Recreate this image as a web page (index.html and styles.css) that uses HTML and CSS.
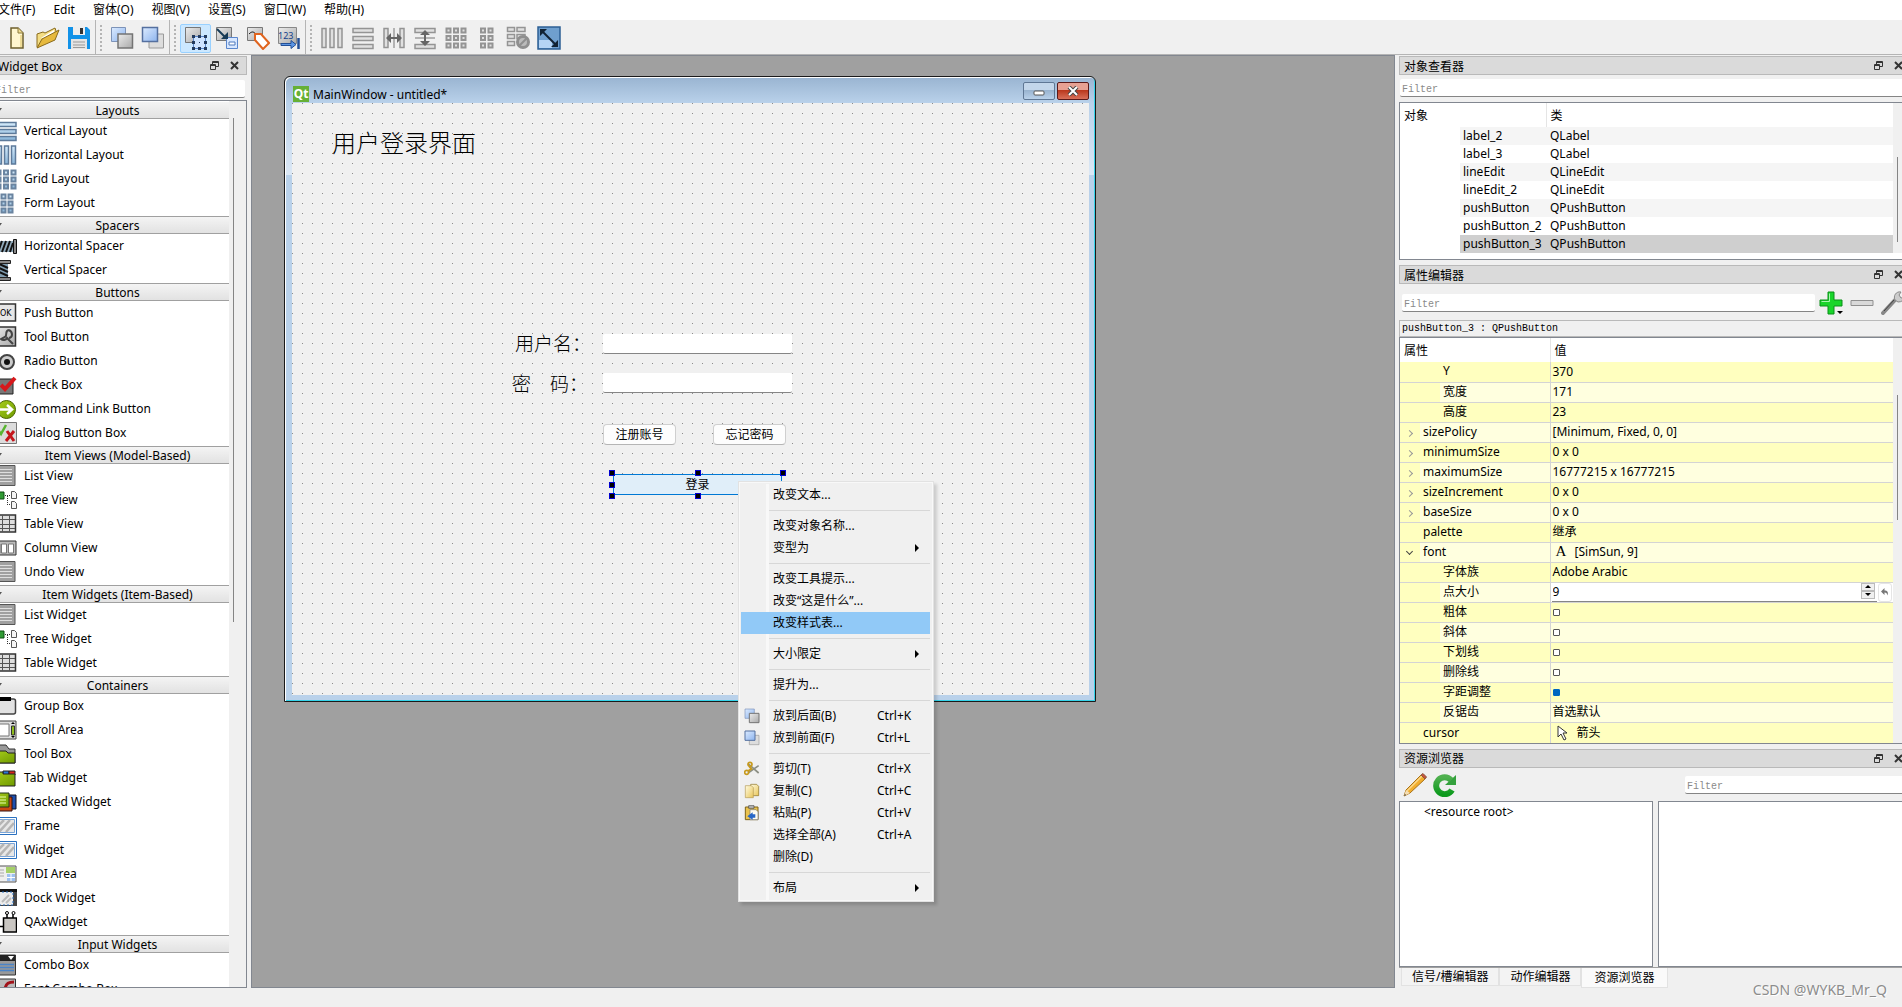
FILE: index.html
```html
<!DOCTYPE html>
<html lang="zh-CN">
<head>
<meta charset="utf-8">
<title>MainWindow - untitled*</title>
<link rel="stylesheet" href="styles.css">
</head>
<body>
<svg class="sprite" aria-hidden="true">
  <defs>
    <linearGradient id="blue" x1="0" y1="0" x2="1" y2="1"><stop offset="0" stop-color="#dcebff"/><stop offset="1" stop-color="#8db4ee"/></linearGradient>
    <linearGradient id="grey" x1="0" y1="0" x2="1" y2="1"><stop offset="0" stop-color="#ececec"/><stop offset="1" stop-color="#a9a9a9"/></linearGradient>
    <linearGradient id="cell" x1="0" y1="0" x2="0" y2="1"><stop offset="0" stop-color="#d5ebfb"/><stop offset="1" stop-color="#88b4d8"/></linearGradient>
    <linearGradient id="green" x1="0" y1="0" x2="0" y2="1"><stop offset="0" stop-color="#4fb04f"/><stop offset="1" stop-color="#0d9a1d"/></linearGradient>
    <linearGradient id="gold" x1="0" y1="0" x2="1" y2="1"><stop offset="0" stop-color="#fffbe0"/><stop offset="1" stop-color="#e8c55a"/></linearGradient>
    <linearGradient id="lime" x1="0" y1="0" x2="1" y2="1"><stop offset="0" stop-color="#a9cf1c"/><stop offset="1" stop-color="#6f9a00"/></linearGradient>
  </defs>
  <symbol id="new" viewBox="0 0 24 24"><path d="M6 2h7l5 5v15H6z" fill="#fff6cf" stroke="#6e5f2c" stroke-width="1.500"/><path d="M13 2v5h5" fill="#f1dd93" stroke="#8c7a3c"/><path d="M16 9v12" stroke="#efdc96" stroke-width="2"/></symbol>
  <symbol id="open" viewBox="0 0 24 24"><path d="M1 21V8l6-2 2 1 10-5 1 3 1 3" fill="#f3dd84" stroke="#8a6b1c"/><path d="M5 12 18 4l1 7" fill="#fff"/><path d="M1 22 6 13 23 4l-4 10z" fill="#e6b93d" stroke="#8a6b1c"/></symbol>
  <symbol id="save" viewBox="0 0 24 24"><path d="M1 1h19l3 3v19H1z" fill="#1292e8"/><path d="M6 1h12v8H6z" fill="#eee"/><path d="M13 2h3v6h-3z" fill="#333"/><path d="M4 13h16v10H4z" fill="#e4e4e4"/><path d="M6 16h12M6 19h12M6 21.500h12" stroke="#999"/></symbol>
  <symbol id="back" viewBox="0 0 24 24"><path d="M1.500 1.500h14v14h-14z" fill="url(#blue)" stroke="#7d93b8"/><path d="M8 8h14.500v14H8z" fill="url(#grey)" stroke="#747474" stroke-width="1.500"/></symbol>
  <symbol id="front" viewBox="0 0 24 24"><path d="M8 8h14.500v14H8z" fill="#ddd" stroke="#9a9a9a"/><path d="M1.500 1.500h15v14h-15z" fill="url(#blue)" stroke="#55709f" stroke-width="1.500"/></symbol>
  <symbol id="edit-widgets" viewBox="0 0 24 24"><path d="M1.500 1.500h15v15h-15z" fill="url(#grey)" stroke="#777"/><path d="M9.500 10.500h12v12h-12z" fill="#cfe4ff" stroke="#5a86cc"/><path d="M8 9h3v3H8zM14 9h3v3h-3zM20 9h3v3h-3zM8 15h3v3H8zM20 15h3v3h-3zM8 21h3v3H8zM14 21h3v3h-3zM20 21h3v3h-3zM15 16h1v1h-1z" fill="#233a5c"/></symbol>
  <symbol id="edit-signals" viewBox="0 0 24 24"><path d="M1.500 1.500h15v13h-15z" fill="url(#grey)" stroke="#777"/><path d="M11.500 11.500h11v11h-11z" fill="#d7e7ff" stroke="#5a86cc"/><path d="M14 16h6v3h-6z" fill="#fff" stroke="#4d79bd"/><path d="m2 3 9 9" stroke="#173b57" stroke-width="2"/><path d="M13 13V6L6 13z" fill="#173b57"/></symbol>
  <symbol id="edit-buddies" viewBox="0 0 24 24"><path d="M1.500 1.500h15v13h-15z" fill="url(#grey)" stroke="#777"/><path d="M3 8c3-3 5-3 8 2" fill="none" stroke="#222"/><path d="M9 8h6l8 9-6 6-8-9z" fill="#fff" stroke="#e0641e" stroke-width="2"/></symbol>
  <symbol id="g-cols" viewBox="0 0 24 24"><path d="M2 2.500h4v19H2zM10 2.500h4v19h-4zM18 2.500h4v19h-4z" fill="#e0e0e0" stroke="#949494" stroke-width="1.500"/></symbol>
  <symbol id="g-rows" viewBox="0 0 24 24"><path d="M2 2.500h20v4H2zM2 10.500h20v4H2zM2 18.500h20v4H2z" fill="#e0e0e0" stroke="#949494" stroke-width="1.500"/></symbol>
  <symbol id="g-hsplit" viewBox="0 0 24 24"><path d="M2 2.500h4v19H2zM18 2.500h4v19h-4z" fill="#e0e0e0" stroke="#949494" stroke-width="1.500"/><path d="M12 2v20" stroke="#777"/><path d="m4 12 5-5v4h6V7l5 5-5 5v-4H9v4z" fill="#666"/></symbol>
  <symbol id="g-vsplit" viewBox="0 0 24 24"><path d="M2 2.500h20v4H2zM2 18.500h20v4H2z" fill="#e0e0e0" stroke="#949494" stroke-width="1.500"/><path d="M2 12h20" stroke="#777"/><path d="m12 4 5 5h-4v6h4l-5 5-5-5h4V9H7z" fill="#666"/></symbol>
  <symbol id="g-grid" viewBox="0 0 24 24"><path d="M2.500 2.500h4v4h-4zM10 2.500h4v4h-4zM17.500 2.500h4v4h-4zM2.500 10h4v4h-4zM10 10h4v4h-4zM17.500 10h4v4h-4zM2.500 17.500h4v4h-4zM10 17.500h4v4h-4zM17.500 17.500h4v4h-4z" fill="#e0e0e0" stroke="#949494" stroke-width="2"/></symbol>
  <symbol id="g-form" viewBox="0 0 24 24"><path d="M6 2.500h4v4H6zM13.500 2.500h4v4h-4zM6 10h4v4H6zM13.500 10h4v4h-4zM6 17.500h4v4H6zM13.500 17.500h4v4h-4z" fill="#e0e0e0" stroke="#949494" stroke-width="2"/></symbol>
  <symbol id="g-break" viewBox="0 0 24 24"><path d="M1.500 1.500h7v4h-7zM11 1.500h8v4h-8zM1.500 8.500h7v4h-7zM11 8.500h8v4h-8zM1.500 15.500h7v4h-7z" fill="#e0e0e0" stroke="#949494" stroke-width="1.500"/><circle cx="17" cy="16" r="5.500" fill="#bbb" stroke="#8f8f8f" stroke-width="3"/><path d="m13 20 8-8" stroke="#8f8f8f" stroke-width="2"/></symbol>
  <symbol id="adjust" viewBox="0 0 24 24"><path d="M1 1h22v22H1z" fill="#6f9fce" stroke="#2c5f94" stroke-width="1.500"/><path d="M2 14h13v8H2z" fill="#b5d4f4"/><path d="m6 6 12 12" stroke="#123" stroke-width="2"/><path d="M3 3h7l-7 7zM21 21h-7l7-7z" fill="#123"/></symbol>

  <symbol id="float" viewBox="0 0 9 9"><path d="M2.500 3V.5h6v5H6M.5 3.500h5v5h-5zM.5 4.500h5M2.500 1.500h6" fill="none" stroke="#333"/></symbol>
  <symbol id="cross" viewBox="0 0 9 9"><path d="m1 1 7 7M8 1 1 8" stroke="#333" stroke-width="2"/></symbol>

  <symbol id="rows" viewBox="0 0 24 24"><path d="M1 3.500h22v4H1zM1 10.500h22v4H1zM1 17.500h22v4H1z" fill="url(#cell)" stroke="#5d7a9a" stroke-width="1.500"/></symbol>
  <symbol id="cols" viewBox="0 0 24 24"><path d="M4.500 3h4v18h-4zM11.500 3h4v18h-4zM18.500 3h4v18h-4z" fill="url(#cell)" stroke="#5d7a9a" stroke-width="1.500"/></symbol>
  <symbol id="grid" viewBox="0 0 24 24"><path d="M3.500 3.500h4v4h-4zM11 3.500h4v4h-4zM18.500 3.500h4v4h-4zM3.500 10.500h4v4h-4zM11 10.500h4v4h-4zM18.500 10.500h4v4h-4zM3.500 17.500h4v4h-4zM11 17.500h4v4h-4zM18.500 17.500h4v4h-4z" fill="url(#cell)" stroke="#6a84a0" stroke-width="2"/></symbol>
  <symbol id="form" viewBox="0 0 24 24"><path d="M8.500 3.500h4v4h-4zM15.500 3.500h4v4h-4zM8.500 10.500h4v4h-4zM15.500 10.500h4v4h-4zM8.500 17.500h4v4h-4zM15.500 17.500h4v4h-4z" fill="url(#cell)" stroke="#6a84a0" stroke-width="2"/></symbol>
  <symbol id="hspacer" viewBox="0 0 24 24"><path d="M4 7h16v11H4z" fill="#8fa9ba"/><path d="m5 18 4-11M9 18l4-11M13 18l4-11M17 18l3-9" stroke="#111" stroke-width="2"/><path d="M20.500 5.500h3v14h-3z" fill="#888" stroke="#111"/></symbol>
  <symbol id="vspacer" viewBox="0 0 24 24"><path d="M7 5h8v14H7z" fill="#7f9bae"/><path d="m6 6 9 4M6 10l9 4M6 14l9 4" stroke="#111" stroke-width="2"/><path d="M3.500 2.500h14v3h-14zM3.500 19.500h14v3h-14z" fill="#888" stroke="#222"/></symbol>
  <symbol id="tool" viewBox="0 0 24 24"><path d="M0 2h22.500v19H0z" fill="url(#grey)" stroke="#333" stroke-width="1.500"/><path d="M16 5c-5 1-1 5-4 7l-4 2c2 2 5 1 6-1l6 6M16 5c4 2 4 7 0 8" fill="none" stroke="#444" stroke-width="2"/></symbol>
  <symbol id="radio" viewBox="0 0 24 24"><circle cx="14" cy="13" r="7" fill="#ccc" stroke="#444" stroke-width="2"/><circle cx="14" cy="13" r="3" fill="#111"/></symbol>
  <symbol id="check" viewBox="0 0 24 24"><path d="M3 6h17v15H3z" fill="#777" stroke="#222"/><path d="m8 12 4 4L22 5" fill="none" stroke="#d7191c" stroke-width="4"/></symbol>
  <symbol id="cmdlink" viewBox="0 0 24 24"><circle cx="13.500" cy="12.500" r="9" fill="url(#lime)" stroke="#4a6600"/><path d="M7 12.500h10M14 8l5 4.500-5 4.500" fill="none" stroke="#fff" stroke-width="2.500"/></symbol>
  <symbol id="dialog" viewBox="0 0 24 24"><path d="M0 1.500h23.500v21H0z" fill="#dcdcdc" stroke="#777"/><path d="m5 9 3 4 5-9" fill="none" stroke="#58b531" stroke-width="2.500"/><path d="m14 10 7 10M21 10l-8 10" stroke="#c4161c" stroke-width="3"/></symbol>
  <symbol id="list" viewBox="0 0 24 24"><path d="M0 1.500h22v20H0z" fill="#a0a0a0" stroke="#555"/><path d="M7 5.500h12M7 8.500h12M7 11.500h12M7 14.500h12M7 17.500h12" stroke="#dedede"/></symbol>
  <symbol id="tree" viewBox="0 0 24 24"><path d="M3 4h8v7H3z" fill="#2f9a33" stroke="#0a4a10"/><path d="M12 7.500h6M14.500 8v9M14 16.500h4" stroke="#333" stroke-dasharray="1 1"/><path d="M18.500 3.500h3l2 2v5h-5zM18.500 13.500h3l2 2v5h-5z" fill="#f4f4f4" stroke="#555"/></symbol>
  <symbol id="table" viewBox="0 0 24 24"><path d="M0 3h22.500v17H0z" fill="#dedede" stroke="#333" stroke-width="1.500"/><path d="M0 7.500h22M0 12.500h22M0 16.500h22M9.500 3v17M16.500 3v17" stroke="#555"/></symbol>
  <symbol id="column" viewBox="0 0 24 24"><path d="M0 5h23v14H0z" fill="#bbb" stroke="#333"/><path d="M2 8h5v9H2zM8.500 8h5v9h-5zM15.500 8h5v9h-5z" fill="#fff" stroke="#777"/></symbol>
  <symbol id="group" viewBox="0 0 24 24"><rect x="0" y="5" width="22.500" height="15" rx="2" fill="#e2e2e2" stroke="#444" stroke-width="1.500"/><path d="M7 3h11v4H7z" fill="#000"/></symbol>
  <symbol id="scroll" viewBox="0 0 24 24"><path d="M0 3h23v18H0z" fill="#ddd" stroke="#444"/><path d="M5 6h11v12H5z" fill="#fff" stroke="#777"/><path d="M18.500 8h3v9h-3z" fill="#8fbd1c" stroke="#333"/><path d="m18 6 2-2 2 2zM18 18l2 2 2-2z" fill="#000"/></symbol>
  <symbol id="toolbox" viewBox="0 0 24 24"><path d="M0 3h13l3 4h6v14H0z" fill="#999" stroke="#333"/><path d="M0 9h13l2 2h7v10H0z" fill="url(#lime)" stroke="#222"/></symbol>
  <symbol id="tab" viewBox="0 0 24 24"><path d="M10 5h6v4h-6z" fill="#2c79d8" stroke="#222"/><path d="M16 5h6v4h-6z" fill="#d8261c" stroke="#222"/><path d="M0 6h10v2h12v12H0z" fill="url(#lime)" stroke="#222"/></symbol>
  <symbol id="stack" viewBox="0 0 24 24"><path d="M10 5h13v14H10z" fill="#1d4fae" stroke="#112"/><path d="M6 7h13v14H6z" fill="#c94812" stroke="#311"/><path d="M0 3h16v14H0z" fill="url(#lime)" stroke="#232"/><path d="M6 7h7M6 10h7M6 13h7" stroke="#eaffaf"/></symbol>
  <symbol id="frame" viewBox="0 0 24 24"><path d="M0 3.500h23.500v17H0z" fill="#fff" stroke="#2b71c0"/><path d="M0 5.500h21.500v13H0z" fill="#e7e7e7" stroke="#7aa5d8"/><path d="m6 18 11-12M13 18l8-9M4 13l7-7" stroke="#b5b5b5" stroke-width="2.500"/></symbol>
  <symbol id="mdi" viewBox="0 0 24 24"><path d="M0 4h23v16H0z" fill="#eee" stroke="#555"/><path d="M13 5h9v6h-9z" fill="#a5d068"/><path d="M5 8h6M5 11h6M5 14h6" stroke="#aaa"/><path d="M14 12h8v7h-8z" fill="#9cc0f0"/><path d="M14 15.500h8M18 12v7" stroke="#fff"/></symbol>
  <symbol id="dock" viewBox="0 0 24 24"><path d="M0 3h24v17H0z" fill="#444"/><path d="M0 3h24v3H0z" fill="#111"/><path d="M5 6h15v13H5z" fill="#ececec" stroke="#2b71c0" stroke-dasharray="2 2"/><path d="m9 16 7-7M13 17l5-5" stroke="#bbb" stroke-width="2"/></symbol>
  <symbol id="qax" viewBox="0 0 24 24"><path d="M10.500 8h13v14h-13z" fill="#c9c6c2" stroke="#000" stroke-width="1.500"/><path d="M7 16.500h3M14 8V4M20 8V4" stroke="#000" stroke-width="1.500"/><circle cx="14" cy="3" r="1.500" fill="#fff" stroke="#000"/><circle cx="20.500" cy="3" r="1.500" fill="#fff" stroke="#000"/></symbol>
  <symbol id="combo" viewBox="0 0 24 24"><path d="M0 2h22.500v20H0z" fill="#999" stroke="#333"/><path d="M0 2h22v6H0z" fill="#222"/><path d="M15 3h6l-3 4z" fill="#fff"/><path d="M4 11.500h17M4 14.500h17M4 17.500h17" stroke="#4a84c8" stroke-width="1.500"/></symbol>
  <symbol id="fontcombo" viewBox="0 0 24 24"><path d="M0 2h22.500v20H0z" fill="#bbb" stroke="#333"/><path d="M12 12c1-6 4-7 9-7" fill="none" stroke="#a1131a" stroke-width="3"/></symbol>

  <symbol id="cut" viewBox="0 0 24 24"><path d="m6 4 16 14M22 7 6 18" stroke="#8c8f84" stroke-width="2.500"/><circle cx="9" cy="5" r="3" fill="none" stroke="#c79a1d" stroke-width="2.500"/><circle cx="4" cy="17" r="3" fill="none" stroke="#c79a1d" stroke-width="2.500"/><path d="m8 8 3 4-5 3" fill="none" stroke="#c79a1d" stroke-width="3"/></symbol>
  <symbol id="copy" viewBox="0 0 24 24"><path d="M10 2h9l3 3v14H10z" fill="url(#gold)" stroke="#8a6f24"/><path d="M2 4h9l3 3v15H2z" fill="url(#gold)" stroke="#b39a55"/></symbol>
  <symbol id="paste" viewBox="0 0 24 24"><path d="M2 3h19v19H2z" fill="#eac34e" stroke="#7d6218" stroke-width="1.500"/><path d="M7 1h8v4H7z" fill="#bbb" stroke="#444"/><path d="M9 7h9l3 3v12H9z" fill="#fffdf0" stroke="#777"/><path d="m5 17 8-6v3h4v5h-4v3z" fill="#2868c8"/></symbol>
  <symbol id="plus" viewBox="0 0 24 24"><path d="M9 1h6v8h8v6h-8v8H9v-8H1V9h8z" fill="#19d52a" stroke="#0b8f18"/><path d="M10.500 2.500v8h-8" fill="none" stroke="#a9f5ae"/></symbol>
  <symbol id="minus" viewBox="0 0 24 24"><path d="M1 9.500h22v5H1z" fill="#d9d9d9" stroke="#8f8f8f"/></symbol>
  <symbol id="wrench" viewBox="0 0 24 24"><path d="M2 22 14 9" stroke="#888" stroke-width="4" stroke-linecap="round"/><path d="M3 20 13 9" stroke="#444"/><path d="M20 1c-5-1-8 4-6 8l3 2c4 0 6-2 7-5l-4 1-2-3z" fill="#ccc" stroke="#888"/></symbol>
  <symbol id="pencil" viewBox="0 0 24 24"><path d="m1 23 2-6L18 2l4 4L7 20z" fill="#f2ae2e" stroke="#a8721a"/><path d="m4 18 15-15" stroke="#fbd98c" stroke-width="1.500"/><path d="m1 23 2-6 4 3z" fill="#f5deb3"/><path d="m1 23 1-2 1 1z" fill="#333"/><path d="m18 2 2-1.500L23.500 4 22 6z" fill="#c9523c" stroke="#8a5a40"/></symbol>
  <symbol id="reload" viewBox="0 0 24 24"><path d="M19 17a8.500 8.500 0 1 1-1-10" fill="none" stroke="url(#green)" stroke-width="6"/><path d="M23 2v10H12z" fill="#35a13d"/></symbol>
  <symbol id="pointer" viewBox="0 0 12 16"><path d="M1 1v11l3-3 3 6 2-1-3-6h4z" fill="#fff" stroke="#333"/></symbol>
  <symbol id="undo" viewBox="0 0 8 8"><path d="M0 3.500 3.500 0v2.500c3 0 4 1.500 3 5-.5-2-1-3-3-3V7z" fill="#777"/></symbol>
</svg>

<nav class="menubar" aria-label="Menu">
  <button>文件(F)</button><button>Edit</button><button>窗体(O)</button><button>视图(V)</button><button>设置(S)</button><button>窗口(W)</button><button>帮助(H)</button>
</nav>

<div class="toolbar" role="toolbar">
  <div class="tools tools-first">
    <button aria-label="New"><svg><use href="#new"/></svg></button><button aria-label="Open"><svg><use href="#open"/></svg></button><button aria-label="Save"><svg><use href="#save"/></svg></button>
  </div>
  <div class="tools"><span class="grip"></span>
    <button aria-label="Send to back"><svg><use href="#back"/></svg></button><button aria-label="Bring to front"><svg><use href="#front"/></svg></button>
  </div>
  <div class="tools"><span class="grip"></span>
    <button class="on" aria-label="Edit widgets"><svg><use href="#edit-widgets"/></svg></button><button aria-label="Edit signals"><svg><use href="#edit-signals"/></svg></button><button aria-label="Edit buddies"><svg><use href="#edit-buddies"/></svg></button><button aria-label="Edit tab order"><svg viewBox="0 0 24 24"><path d="M1.500 1.500h18v16h-18z" fill="url(#grey)" stroke="#888"/><text x="1" y="13" font-size="9" font-family="Noto Sans" fill="#133f8c">123</text><path d="M4 17.500h10v-3l5 4-5 4v-3H4z" fill="#5c96e4" stroke="#234f96"/><path d="M21.500 12v11" stroke="#234f96" stroke-width="2.500"/></svg></button>
  </div>
  <div class="tools tools-last"><span class="grip"></span>
    <button aria-label="Lay out horizontally"><svg><use href="#g-cols"/></svg></button><button aria-label="Lay out vertically"><svg><use href="#g-rows"/></svg></button><button aria-label="Horizontal splitter"><svg><use href="#g-hsplit"/></svg></button><button aria-label="Vertical splitter"><svg><use href="#g-vsplit"/></svg></button><button aria-label="Grid"><svg><use href="#g-grid"/></svg></button><button aria-label="Form"><svg><use href="#g-form"/></svg></button><button aria-label="Break layout"><svg><use href="#g-break"/></svg></button><button aria-label="Adjust size"><svg><use href="#adjust"/></svg></button>
  </div>
</div>

<main class="workspace">
  <aside class="dock widget-box">
    <header class="dock-title"><h2>Widget Box</h2><button aria-label="Float"><svg><use href="#float"/></svg></button><button aria-label="Close"><svg><use href="#cross"/></svg></button></header>
    <input class="filter" placeholder="Filter" aria-label="Filter widgets">
    <div class="widget-frame">
      <div class="widget-list">
        <section><h3>Layouts</h3><ul>
          <li><svg><use href="#rows"/></svg>Vertical Layout</li><li><svg><use href="#cols"/></svg>Horizontal Layout</li><li><svg><use href="#grid"/></svg>Grid Layout</li><li><svg><use href="#form"/></svg>Form Layout</li></ul></section>
        <section><h3>Spacers</h3><ul>
          <li><svg><use href="#hspacer"/></svg>Horizontal Spacer</li><li><svg><use href="#vspacer"/></svg>Vertical Spacer</li></ul></section>
        <section><h3>Buttons</h3><ul>
          <li><svg viewBox="0 0 24 24"><path d="M0 3h22.500v17H0z" fill="#e6e6e6" stroke="#333" stroke-width="1.500"/><text x="7" y="15" font-size="8" font-family="DejaVu Sans" fill="#000">OK</text></svg>Push Button</li><li><svg><use href="#tool"/></svg>Tool Button</li><li><svg><use href="#radio"/></svg>Radio Button</li><li><svg><use href="#check"/></svg>Check Box</li><li><svg><use href="#cmdlink"/></svg>Command Link Button</li><li><svg><use href="#dialog"/></svg>Dialog Button Box</li></ul></section>
        <section><h3>Item Views (Model-Based)</h3><ul>
          <li><svg><use href="#list"/></svg>List View</li><li><svg><use href="#tree"/></svg>Tree View</li><li><svg><use href="#table"/></svg>Table View</li><li><svg><use href="#column"/></svg>Column View</li><li><svg><use href="#list"/></svg>Undo View</li></ul></section>
        <section><h3>Item Widgets (Item-Based)</h3><ul>
          <li><svg><use href="#list"/></svg>List Widget</li><li><svg><use href="#tree"/></svg>Tree Widget</li><li><svg><use href="#table"/></svg>Table Widget</li></ul></section>
        <section><h3>Containers</h3><ul>
          <li><svg><use href="#group"/></svg>Group Box</li><li><svg><use href="#scroll"/></svg>Scroll Area</li><li><svg><use href="#toolbox"/></svg>Tool Box</li><li><svg><use href="#tab"/></svg>Tab Widget</li><li><svg><use href="#stack"/></svg>Stacked Widget</li><li><svg><use href="#frame"/></svg>Frame</li><li><svg><use href="#frame"/></svg>Widget</li><li><svg><use href="#mdi"/></svg>MDI Area</li><li><svg><use href="#dock"/></svg>Dock Widget</li><li><svg><use href="#qax"/></svg>QAxWidget</li></ul></section>
        <section><h3>Input Widgets</h3><ul>
          <li><svg><use href="#combo"/></svg>Combo Box</li><li><svg><use href="#fontcombo"/></svg>Font Combo Box</li></ul></section>
      </div>
      <div class="scrollbar widget-scroll"><span></span></div>
    </div>
  </aside>

  <div class="mdi">
    <section class="form-window">
      <header class="form-title">
        <span class="qt">Qt</span><h1>MainWindow - untitled*</h1>
        <button class="min" aria-label="Minimize"><svg viewBox="0 0 12 10"><rect x="1" y="5" width="10" height="4" rx="1" fill="#fff" stroke="#555"/></svg></button>
        <button class="close" aria-label="Close"><svg viewBox="0 0 12 10"><path d="m2 1 8 8M10 1 2 9" stroke="#444" stroke-width="4"/><path d="m2 1 8 8M10 1 2 9" stroke="#fff" stroke-width="2"/></svg></button>
      </header>
      <div class="canvas">
        <p class="headline">用户登录界面</p>
        <label class="user" for="user">用户名：</label><input class="user-edit" id="user">
        <label class="pass" for="pass">密&#12288;码：</label><input class="pass-edit" id="pass">
        <button class="register">注册账号</button>
        <button class="forgot">忘记密码</button>
        <button class="login">登录</button>
        <div class="handles"><i></i><i></i><i></i><i></i><i class="blank"></i><i></i><i></i><i></i><i></i></div>
      </div>
    </section>
    <div class="context-menu" role="menu">
      <button>改变文本...</button>
      <hr>
      <button>改变对象名称...</button>
      <button class="sub">变型为</button>
      <hr>
      <button>改变工具提示...</button>
      <button>改变“这是什么”...</button>
      <button class="active">改变样式表...</button>
      <hr>
      <button class="sub">大小限定</button>
      <hr>
      <button>提升为...</button>
      <hr>
      <button><svg><use href="#back"/></svg>放到后面(B)<kbd>Ctrl+K</kbd></button>
      <button><svg><use href="#front"/></svg>放到前面(F)<kbd>Ctrl+L</kbd></button>
      <hr>
      <button><svg><use href="#cut"/></svg>剪切(T)<kbd>Ctrl+X</kbd></button>
      <button><svg><use href="#copy"/></svg>复制(C)<kbd>Ctrl+C</kbd></button>
      <button><svg><use href="#paste"/></svg>粘贴(P)<kbd>Ctrl+V</kbd></button>
      <button>选择全部(A)<kbd>Ctrl+A</kbd></button>
      <button>删除(D)</button>
      <hr>
      <button class="sub">布局</button>
    </div>
  </div>

  <aside class="right">
    <section class="dock inspector">
      <header class="dock-title"><h2>对象查看器</h2><button aria-label="Float"><svg><use href="#float"/></svg></button><button aria-label="Close"><svg><use href="#cross"/></svg></button></header>
      <input class="filter" placeholder="Filter" aria-label="Filter objects">
      <div class="table-frame">
        <table class="objects">
          <colgroup><col class="c-indent"><col class="c-name"><col></colgroup>
          <thead><tr><th colspan="2">对象</th><th>类</th></tr></thead>
          <tbody>
            <tr><td></td><td>label_2</td><td>QLabel</td></tr>
            <tr><td></td><td>label_3</td><td>QLabel</td></tr>
            <tr><td></td><td>lineEdit</td><td>QLineEdit</td></tr>
            <tr><td></td><td>lineEdit_2</td><td>QLineEdit</td></tr>
            <tr><td></td><td>pushButton</td><td>QPushButton</td></tr>
            <tr><td></td><td>pushButton_2</td><td>QPushButton</td></tr>
            <tr class="selected"><td></td><td>pushButton_3</td><td>QPushButton</td></tr>
          </tbody>
        </table>
        <div class="scrollbar object-scroll"><span></span></div>
      </div>
    </section>

    <section class="dock properties">
      <header class="dock-title"><h2>属性编辑器</h2><button aria-label="Float"><svg><use href="#float"/></svg></button><button aria-label="Close"><svg><use href="#cross"/></svg></button></header>
      <div class="prop-tools">
        <input class="filter" placeholder="Filter" aria-label="Filter properties">
        <button class="drop" aria-label="Add"><svg><use href="#plus"/></svg></button><button aria-label="Remove"><svg><use href="#minus"/></svg></button><button aria-label="Configure"><svg><use href="#wrench"/></svg></button>
      </div>
      <p class="object-name">pushButton_3 : QPushButton</p>
      <div class="table-frame">
        <table class="props">
          <colgroup><col class="c-prop"><col></colgroup>
          <thead><tr><th>属性</th><th>值</th></tr></thead>
          <tbody>
            <tr class="deep"><td><span>Y</span></td><td>370</td></tr>
            <tr class="deep"><td><span>宽度</span></td><td>171</td></tr>
            <tr class="deep"><td><span>高度</span></td><td>23</td></tr>
            <tr class="fold"><td><span>sizePolicy</span></td><td>[Minimum, Fixed, 0, 0]</td></tr>
            <tr class="fold"><td><span>minimumSize</span></td><td>0 x 0</td></tr>
            <tr class="fold"><td><span>maximumSize</span></td><td>16777215 x 16777215</td></tr>
            <tr class="fold"><td><span>sizeIncrement</span></td><td>0 x 0</td></tr>
            <tr class="fold"><td><span>baseSize</span></td><td>0 x 0</td></tr>
            <tr><td><span>palette</span></td><td>继承</td></tr>
            <tr class="fold open"><td><span>font</span></td><td><b class="font-mark">A</b>[SimSun, 9]</td></tr>
            <tr class="deep"><td><span>字体族</span></td><td>Adobe Arabic</td></tr>
            <tr class="deep editing"><td><span><label for="size">点大小</label></span></td><td><div class="editor"><input id="size" value="9"><div class="spin"><button aria-label="Up"></button><button aria-label="Down"></button></div><button class="reset" aria-label="Reset"><svg><use href="#undo"/></svg></button></div></td></tr>
            <tr class="deep"><td><span><label for="bold">粗体</label></span></td><td><input type="checkbox" id="bold"></td></tr>
            <tr class="deep"><td><span><label for="italic">斜体</label></span></td><td><input type="checkbox" id="italic"></td></tr>
            <tr class="deep"><td><span><label for="under">下划线</label></span></td><td><input type="checkbox" id="under"></td></tr>
            <tr class="deep"><td><span><label for="strike">删除线</label></span></td><td><input type="checkbox" id="strike"></td></tr>
            <tr class="deep"><td><span><label for="kern">字距调整</label></span></td><td><input type="checkbox" id="kern" checked></td></tr>
            <tr class="deep"><td><span>反锯齿</span></td><td>首选默认</td></tr>
            <tr><td><span>cursor</span></td><td><svg class="pointer"><use href="#pointer"/></svg>箭头</td></tr>
          </tbody>
        </table>
        <div class="scrollbar prop-scroll"><span></span></div>
      </div>
    </section>

    <section class="dock resources">
      <header class="dock-title"><h2>资源浏览器</h2><button aria-label="Float"><svg><use href="#float"/></svg></button><button aria-label="Close"><svg><use href="#cross"/></svg></button></header>
      <div class="res-tools">
        <button aria-label="Edit resources"><svg><use href="#pencil"/></svg></button><button aria-label="Reload"><svg><use href="#reload"/></svg></button>
        <input class="filter" placeholder="Filter" aria-label="Filter resources">
      </div>
      <div class="res-panes"><div class="pane">&lt;resource root&gt;</div><div class="pane"></div></div>
      <div class="tabs" role="tablist"><button role="tab">信号/槽编辑器</button><button role="tab">动作编辑器</button><button role="tab" aria-selected="true">资源浏览器</button></div>
    </section>
  </aside>
</main>
<footer class="statusbar"></footer>
<p class="watermark">CSDN @WYKB_Mr_Q</p>
</body>
</html>
```
FILE: styles.css
```css
* { box-sizing: border-box; }

:root {
  --frame: #828790;
  --panel: #f0f0f0;
  --line: #b9b9b9;
  --mono: "Liberation Mono", "Noto Sans CJK SC", monospace;
}

body {
  margin: 0;
  height: 100vh;
  display: flex;
  flex-direction: column;
  overflow: hidden;
  position: relative;
  background: var(--panel);
  color: #000;
  font: 12px/18px "Noto Sans", "Noto Sans CJK SC", sans-serif;
}

button, input {
  font: inherit;
  color: inherit;
  margin: 0;
  padding: 0;
  border: 0;
  background: none;
  min-width: 0;
}

h1, h2, h3, p, ul { margin: 0; padding: 0; font-size: 12px; font-weight: 400; }
svg { display: block; flex: none; }
.sprite { position: absolute; width: 0; height: 0; }

/* Menu bar and toolbar */
.menubar {
  flex: none;
  display: flex;
  gap: 18px;
  height: 20px;
  margin-left: -2px;
  background: #fff;
}

.toolbar {
  flex: none;
  display: flex;
  height: 35px;
  border-bottom: 1px solid #b4b4b4;
}

.tools {
  display: flex;
  align-items: center;
  padding: 2px 1px 0 0;
  border-right: 1px solid #b4b4b4;
}
.tools-first { padding-left: 1px; }
.tools-last { border-right: 0; }

.tools button {
  display: grid;
  place-items: center;
  width: 31px;
  height: 29px;
}
.tools svg { width: 24px; height: 24px; }
.tools .on { background: #cce8ff; border: 1px solid #99d1ff; border-radius: 2px; }

.grip {
  width: 2px;
  height: 26px;
  margin: 0 4px;
  background: repeating-linear-gradient(#b4b4b4 0 2px, transparent 2px 4px);
}

/* Work area: widget box, form area, docks */
.workspace {
  flex: 1;
  min-height: 0;
  display: grid;
  grid-template-columns: 254px minmax(0, 1fr) 508px;
  gap: 4px;
  margin: 0 -5px 0 -7px;
}
.statusbar { flex: none; height: 19px; }

.dock { display: flex; flex-direction: column; min-height: 0; }

.dock-title {
  flex: none;
  display: flex;
  align-items: center;
  gap: 11px;
  height: 19px;
  padding: 0 4px;
  background: #dadada;
  border: 1px solid var(--line);
}
.dock-title h2 { flex: 1; padding-top: 2px; }
.dock-title svg { width: 9px; height: 9px; }

.filter {
  flex: none;
  height: 18px;
  padding: 3px 2px 0;
  background: #fff;
  border-bottom: 1px solid #858585;
  border-radius: 2px;
  font: 10px/14px var(--mono);
}
.filter::placeholder { color: #8a8a8a; opacity: 1; }

.scrollbar { background: var(--panel); }
.scrollbar span { display: block; width: 1px; background: #858585; }

.widget-box { padding-top: 1px; }
.widget-box .dock-title { padding-right: 7px; }
.widget-box .filter { margin: 5px 2px 2px 0; }

.widget-frame {
  flex: 1;
  min-height: 0;
  display: flex;
  overflow: hidden;
  border: 1px solid var(--frame);
  border-left: 0;
  background: #fff;
}
.widget-list { flex: 1; overflow: hidden; }
.widget-list section { margin-bottom: 1px; }
.widget-list ul { list-style: none; }

.widget-list h3 {
  display: flex;
  align-items: center;
  justify-content: center;
  height: 18px;
  padding: 2px 0 0 13px;
  border-top: 1px solid #a0a0a0;
  border-bottom: 1px solid #a0a0a0;
  background: linear-gradient(#f4f4f4, #e2e2e2);
  position: relative;
}
.widget-list section:first-child h3 { border-top-color: #fff; }
.widget-list h3::before {
  content: "";
  position: absolute;
  left: 3px;
  top: 6px;
  border: 3px solid transparent;
  border-top: 4px solid #555;
}

.widget-list li { display: flex; align-items: center; gap: 7px; height: 24px; }
.widget-list li svg { width: 24px; height: 24px; }
.widget-scroll { width: 17px; padding: 17px 0 0 4px; }
.widget-scroll span { height: 58%; }

/* MDI area */
.mdi { position: relative; background: #a0a0a0; border: 1px solid var(--frame); }

.form-window {
  position: absolute;
  left: 32px;
  top: 20px;
  width: 812px;
  padding: 0 6px 6px;
  background: linear-gradient(#99b4d1, #b9d1ea 26px, #dce8f5 98px, #b9d1ea 98px);
  border: 1px solid #1a1a1a;
  border-radius: 6px 6px 0 0;
  box-shadow: inset 1px 1px #fff, inset -1px -1px #35d3ea;
}
.form-title {
  display: flex;
  align-items: flex-start;
  height: 26px;
  padding: 5px 0 0 2px;
}
.form-title h1 { flex: 1; margin: 4px 0 0 4px; }
.qt {
  width: 16px;
  height: 16px;
  margin-top: 4px;
  background: #66b036;
  color: #fff;
  font: 700 12px/16px "Noto Sans", sans-serif;
  text-align: center;
}
.form-title button {
  display: grid;
  place-items: center;
  width: 32px;
  height: 18px;
  border: 1px solid #5f7794;
  border-radius: 2px;
  background: linear-gradient(#c3d6ea 45%, #98b3cf 45%, #b9d1ea);
}
.form-title svg { width: 12px; height: 10px; }
.form-title .close {
  margin-left: 2px;
  border-color: #5a1a1a;
  background: linear-gradient(#e7a193 45%, #b9361c 45%, #d8705a);
}

.canvas {
  position: relative;
  height: 592px;
  margin: 0 0 0 1px;
  background: conic-gradient(from 270deg at 1px 1px, #8c8c8c 90deg, transparent 0) 0 0 / 10px 10px var(--panel);
}
.canvas > * { position: absolute; }
.canvas .headline { left: 40px; top: 24px; font-size: 24px; line-height: 32px; font-weight: 300; }
.canvas label { font-size: 19px; line-height: 26px; font-weight: 300; white-space: nowrap; }
.user { left: 223px; top: 228px; }
.pass { left: 220px; top: 268px; }
.canvas input { left: 311px; width: 189px; height: 20px; background: #fff; border-bottom: 1px solid #858585; border-radius: 2px; }
.user-edit { top: 231px; }
.pass-edit { top: 270px; }
.canvas button { top: 321px; width: 73px; height: 21px; padding-top: 1px; background: #fdfdfd; border: 1px solid #cfcfcf; border-bottom-color: #b5b5b5; border-radius: 4px; line-height: 18px; }
.register { left: 311px; }
.forgot { left: 421px; }
.canvas .login { left: 321px; top: 371px; width: 169px; background: #e0eef9; border-color: #0078d4; border-radius: 0; }

.handles {
  left: 317px;
  top: 367px;
  width: 177px;
  height: 29px;
  display: grid;
  grid-template-columns: repeat(3, 6px);
  justify-content: space-between;
  align-content: space-between;
}
.handles i { width: 6px; height: 6px; background: #000; border: 1px solid #0000d0; }
.handles .blank { visibility: hidden; }

/* Context menu */
.context-menu {
  position: absolute;
  left: 486px;
  top: 425px;
  width: 196px;
  padding: 2px 3px 2px 2px;
  background: linear-gradient(#f8f8f8, #f8f8f8) 27px 2px / 3px 100% no-repeat var(--panel);
  border: 1px solid #e2e2e2;
  outline: 1px solid #f8f8f8;
  outline-offset: -2px;
  box-shadow: 3px 3px 3px rgba(0, 0, 0, .15);
}
.context-menu button {
  display: flex;
  align-items: center;
  position: relative;
  width: 100%;
  height: 22px;
  padding-left: 32px;
}
.context-menu .active { background: #91c9f7; }
.context-menu hr { height: 1px; margin: 4px 0 4px 28px; border: 0; background: #d7d7d7; }
.context-menu svg { width: 16px; height: 16px; margin: 0 13px 0 -29px; }
.context-menu kbd { position: absolute; left: 136px; font: inherit; }
.context-menu .sub::after {
  content: "";
  margin: 0 11px 0 auto;
  border: 4px solid transparent;
  border-left-color: #000;
  border-right: 0;
}

/* Right docks */
.right { display: flex; flex-direction: column; gap: 5px; padding-top: 1px; min-height: 0; }
.right .dock-title { padding-right: 3px; }
.inspector .filter { margin: 4px 0 5px 1px; }

.table-frame {
  display: flex;
  border: 1px solid var(--frame);
  background: #fff;
}
.table-frame table { flex: 1; table-layout: fixed; border-collapse: collapse; }
.table-frame th { height: 24px; padding: 2px 4px 0; font-weight: 400; text-align: left; }
.table-frame td { padding: 0 4px; white-space: nowrap; }
.table-frame .scrollbar { width: 13px; padding-left: 4px; }
.inspector .table-frame { padding-bottom: 6px; }

.c-indent { width: 60px; }
.c-name { width: 86px; }
.objects th + th { border-left: 1px solid #e5e5e5; }
.objects td { height: 18px; line-height: 16px; padding: 0 0 0 3px; }
.objects td:last-child { padding-left: 4px; }
.objects tr:nth-child(odd) td + td { background: #f5f5f5; }
.objects tr.selected td + td { background: #cfcfcf; }
.object-scroll { padding-top: 54px; }
.object-scroll span { height: 85px; }

.prop-tools { display: flex; align-items: center; height: 36px; margin-right: -1px; padding: 2px 0 0 3px; }
.prop-tools .filter { flex: 1; }
.prop-tools button { display: grid; place-items: center; width: 31px; height: 30px; position: relative; }
.prop-tools svg { width: 24px; height: 24px; }
.prop-tools .drop::after { content: ""; position: absolute; right: 3px; bottom: 4px; border: 3px solid transparent; border-top-color: #000; border-bottom: 0; }

.object-name {
  height: 17px;
  padding: 1px 2px 0;
  border: 1px solid var(--line);
  font: 10px/14px var(--mono);
}

.c-prop { width: 150px; }
.props th + th { border-left: 1px solid #e5e5e5; }
.props td { height: 20px; line-height: 18px; border-bottom: 1px solid #d4d4d4; background: #ffffdf; }
.props tr:nth-child(odd) td { background: #ffffbf; }
.props tr:last-child td { border-bottom: 0; padding-top: 1px; }
.props td + td { padding: 0 2px; border-left: 1px solid #d4d4d4; }
.props td:first-child { padding: 0 0 0 20px; background: #ffffbf; }
.props .deep td:first-child { padding-left: 40px; }
.props td > span { display: block; height: 19px; padding-left: 3px; position: relative; }
.props tr:nth-child(even) td > span { background: #ffffdf; }
.props .editing td > span { background: var(--panel); }
.props .fold span::before {
  content: "";
  position: absolute;
  left: -13px;
  top: 8px;
  width: 4px;
  height: 4px;
  border: solid #999;
  border-width: 1px 1px 0 0;
  transform: rotate(45deg);
}
.props .fold.open span::before { top: 6px; border-color: #444; transform: rotate(135deg); }
.props .editing td + td { padding: 0 1px; background: #fff; }
.font-mark { display: inline-block; width: 22px; padding-left: 3px; font: 15px/16px "Liberation Serif", serif; }
.pointer { display: inline-block; width: 12px; height: 16px; margin: 1px 8px 0 4px; vertical-align: top; }

.editor { display: flex; align-items: stretch; height: 19px; }
.editor input { flex: 1; padding-left: 1px; border-bottom: 1px solid #858585; }
.spin { display: flex; flex-direction: column; width: 16px; padding-bottom: 2px; border-bottom: 1px solid #858585; }
.spin button { flex: 1; display: grid; place-items: center; width: 14px; background: var(--panel); border: 1px solid #bbb; }
.spin button::before { content: ""; border: 3px solid transparent; border-bottom-color: #000; border-top: 0; }
.spin button + button::before { border-bottom: 0; border-top: 3px solid #000; }
.reset { display: grid; place-items: center; width: 14px; margin-left: 1px; border: 1px solid #e5e5e5; border-radius: 3px; }
.reset svg { width: 8px; height: 8px; }

.props input[type="checkbox"] {
  appearance: none;
  display: block;
  width: 7px;
  height: 7px;
  background: #fff;
  border: 1px solid #555;
  border-radius: 1px;
}
.props input[type="checkbox"]:checked { background: #0067c0; border-color: #0067c0; }
.prop-scroll { padding-top: 57px; }
.prop-scroll span { height: 125px; }

.resources { flex: 1; }
.res-tools { flex: none; display: flex; align-items: center; height: 33px; padding: 2px 0 0 4px; gap: 6px; }
.res-tools svg { width: 24px; height: 24px; }
.res-tools .filter { width: 222px; margin-left: auto; }
.res-panes { flex: 1; display: grid; grid-template-columns: 254px 1fr; gap: 5px; border-bottom: 1px solid #a0a0a0; }
.pane { padding: 1px 0 0 24px; background: #fff; border: 1px solid var(--frame); }
.tabs { flex: none; display: flex; align-items: flex-start; height: 20px; padding-left: 2px; }
.tabs button { height: 18px; padding: 0 10px; background: #f3f3f3; border: 1px solid #e2e2e2; border-top: 0; line-height: 17px; }
.tabs [aria-selected] { height: 20px; padding: 0 12px; background: #fafafa; line-height: 20px; }

.watermark {
  position: absolute;
  right: 15px;
  bottom: 6px;
  color: #8c8c8c;
  font: 14px/22px "Noto Sans", sans-serif;
  text-shadow: 1px 1px #fff;
}
```
